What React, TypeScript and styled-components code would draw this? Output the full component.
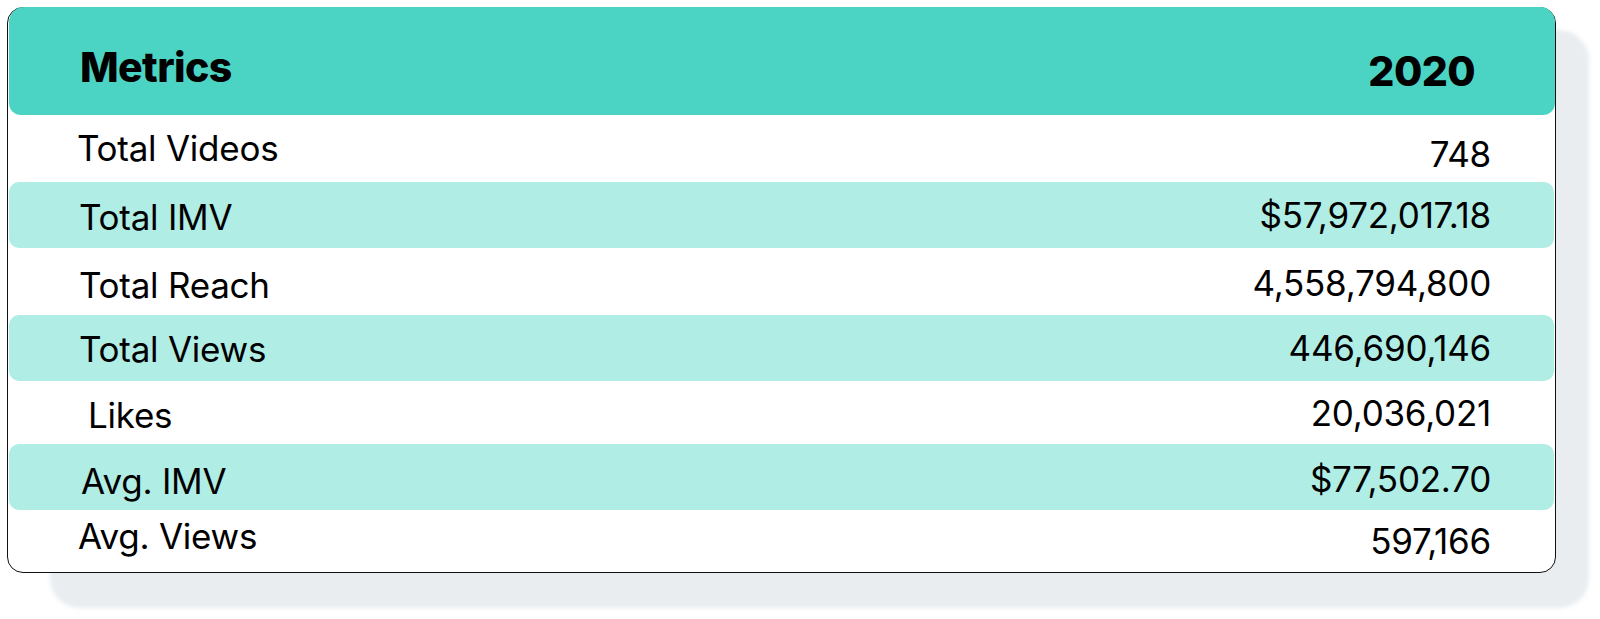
import React from "react";
import styled, { createGlobalStyle } from "styled-components";

const GlobalStyle = createGlobalStyle`
  html, body {
    margin: 0;
    padding: 0;
    background: #ffffff;
  }
  body {
    font-family: "Inter", "Liberation Sans", Arial, sans-serif;
    color: #000;
  }
`;

const Page = styled.div`
  width: 1600px;
  height: 619px;
  padding: 7px 0 0 7px;
  box-sizing: border-box;
  isolation: isolate;
`;

const Card = styled.div`
  position: relative;
  width: 1549px;
  height: 566px;
  box-sizing: border-box;
  border: 1.75px solid #111111;
  border-radius: 16px;
  background: #ffffff;
  padding: 0 0 0 1px;
  display: flex;
  flex-direction: column;

  &::before {
    content: "";
    position: absolute;
    top: 22px;
    left: 42px;
    right: -34px;
    bottom: -36px;
    border-radius: 30px;
    background: #e9edf0;
    filter: blur(2px);
    z-index: -1;
  }
`;

const Header = styled.div`
  height: 108px;
  flex: none;
  box-sizing: border-box;
  background: #4bd4c3;
  border-radius: 15px 15px 12px 12px;
  margin-top: -1px;
  display: flex;
  justify-content: space-between;
  align-items: flex-start;
  padding: 0 80px 0 71px;
`;

const HeaderCell = styled.div<{ $top: number }>`
  font-family: "Inter", "Liberation Sans", Arial, sans-serif;
  font-weight: 800;
  font-size: 41px;
  line-height: 41px;
  letter-spacing: -0.6px;
  padding-top: ${(p) => p.$top}px;
  color: #000;
`;

const Row = styled.div<{ $h: number; $alt: boolean }>`
  height: ${(p) => p.$h}px;
  flex: none;
  box-sizing: border-box;
  background: ${(p) => (p.$alt ? "#b0ede5" : "transparent")};
  border-radius: 10px;
  display: flex;
  justify-content: space-between;
  align-items: center;
  padding: 0 63px 0 70px;
  margin-right: 1px;
`;

const Cell = styled.div<{ $dx?: number; $dy?: number }>`
  font-family: "Inter", "Liberation Sans", Arial, sans-serif;
  font-weight: 400;
  font-size: 35px;
  line-height: 35px;
  letter-spacing: -0.25px;
  color: #000;
  margin-left: ${(p) => p.$dx ?? 0}px;
  position: relative;
  top: ${(p) => p.$dy ?? 0}px;
`;

type Metric = {
  label: string;
  value: string;
  h: number;
  dx?: number;
  ly?: number;
  vy?: number;
};

const metrics: Metric[] = [
  { label: "Total Videos", value: "748", h: 67, dx: -2, ly: 0, vy: 6 },
  { label: "Total IMV", value: "$57,972,017.18", h: 66, ly: 2, vy: 0 },
  { label: "Total Reach", value: "4,558,794,800", h: 67, ly: 4, vy: 2 },
  { label: "Total Views", value: "446,690,146", h: 66, ly: 1, vy: 0 },
  { label: "Likes", value: "20,036,021", h: 63, dx: 9, ly: 3, vy: 1 },
  { label: "Avg. IMV", value: "$77,502.70", h: 66, dx: 2, ly: 4, vy: 2 },
  { label: "Avg. Views", value: "597,166", h: 61, dx: -1, ly: -4, vy: 1 },
];

export default function App() {
  return (
    <>
      <GlobalStyle />
      <Page>
        <Card>
          <Header>
            <HeaderCell $top={40}>Metrics</HeaderCell>
            <HeaderCell $top={44}>2020</HeaderCell>
          </Header>
          {metrics.map((m, i) => (
            <Row key={m.label} $h={m.h} $alt={i % 2 === 1}>
              <Cell $dx={m.dx} $dy={m.ly}>
                {m.label}
              </Cell>
              <Cell $dy={m.vy}>{m.value}</Cell>
            </Row>
          ))}
        </Card>
      </Page>
    </>
  );
}
